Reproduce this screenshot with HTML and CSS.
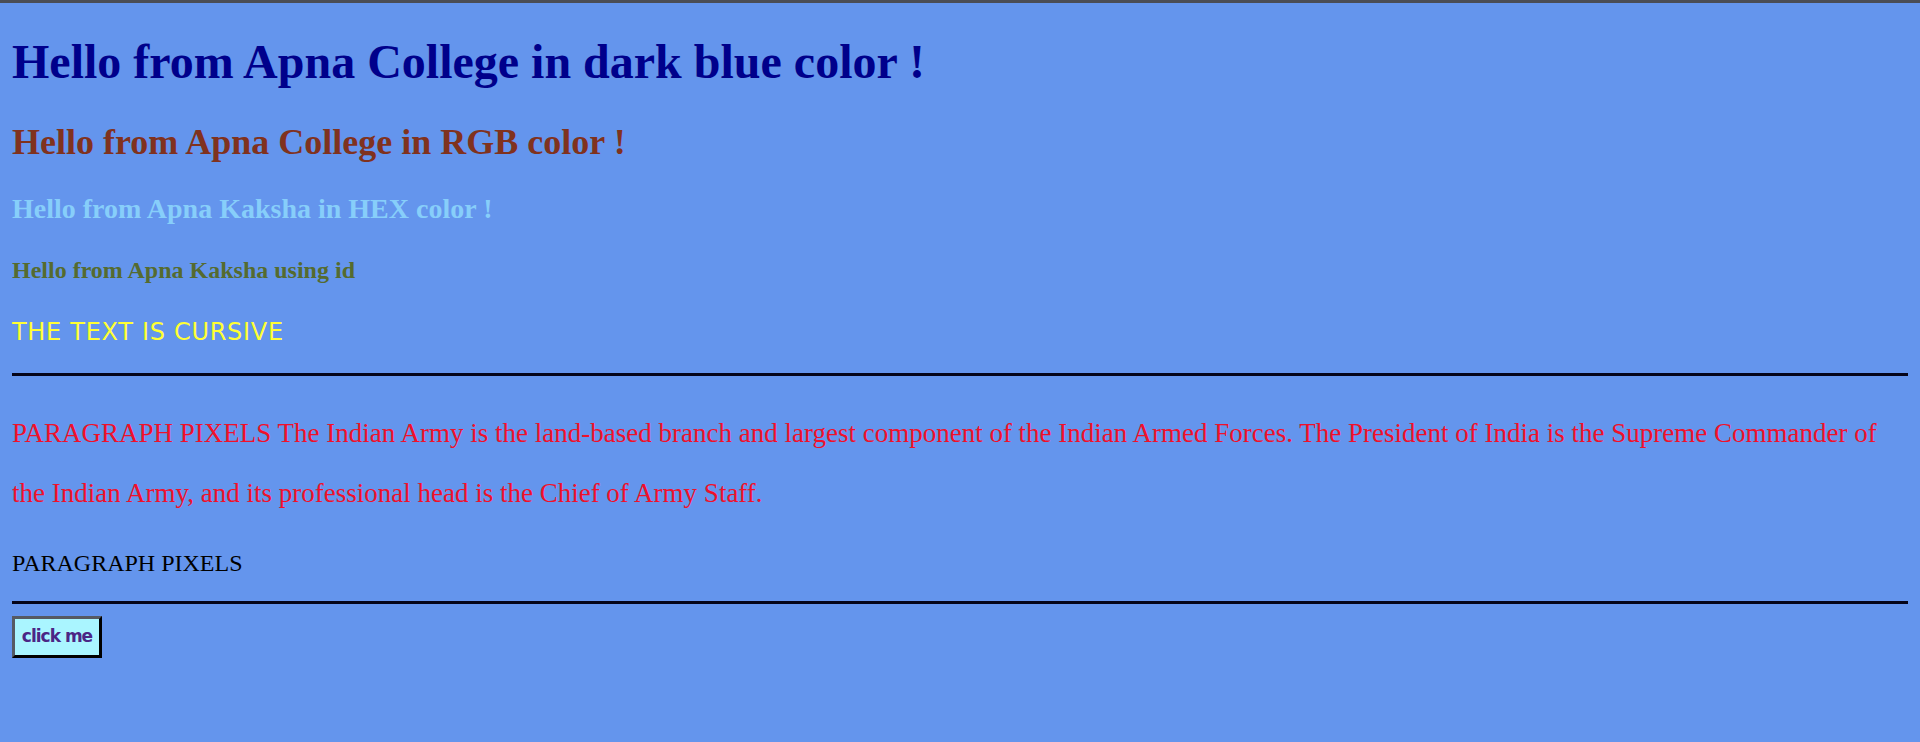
FILE: index.html
```html
<!DOCTYPE html>
<html lang="en">
<head>
<meta charset="utf-8">
<title>Colors</title>
<link rel="stylesheet" href="styles.css">
</head>
<body>
<h1 class="dark-blue">Hello from Apna College in dark blue color !</h1>
<h2 class="rgb">Hello from Apna College in RGB color !</h2>
<h3 class="hex">Hello from Apna Kaksha in HEX color !</h3>
<h4 class="by-id">Hello from Apna Kaksha using id</h4>
<p class="cursive">THE TEXT IS CURSIVE</p>
<hr class="rule">
<p class="para-red">PARAGRAPH PIXELS The Indian Army is the land-based branch and largest component of the Indian Armed Forces. The President of India is the Supreme Commander of the Indian Army, and its professional head is the Chief of Army Staff.</p>
<p class="para">PARAGRAPH PIXELS</p>
<hr class="rule rule-btn">
<button class="btn">click me</button>
</body>
</html>
```
FILE: styles.css
```css
html {
  background: #6495ed;
  border-top: 3px solid #4a4d55;
}
body {
  margin: 12px;
  font-family: "Liberation Serif", "Times New Roman", serif;
  color: #000;
}
h1, h2, h3, h4 {
  font-weight: bold;
}
.dark-blue {
  font-size: 48px;
  margin: 19px 0 32px;
  color: #00008b;
}
.rgb {
  font-size: 36px;
  margin: 29.9px 0;
  color: rgb(128, 50, 30);
}
.hex {
  font-size: 28px;
  margin: 28px 0;
  color: #87cefa;
}
.by-id {
  font-size: 24px;
  margin: 32px 0;
  color: #556b2f;
}
.cursive {
  font-family: "DejaVu Sans", sans-serif;
  font-size: 24px;
  letter-spacing: 0.7px;
  line-height: 33.5px;
  margin: 24px 0;
  color: #ffff33;
}
.rule {
  border: 0;
  height: 3px;
  background: #05051a;
  margin: 24px 0 26px;
}
.para-red {
  font-size: 27px;
  line-height: 60px;
  margin: 27px 0;
  color: #f0102a;
}
.para {
  font-size: 24px;
  margin: 27px 0 24px;
  color: #000;
}
.rule-btn {
  margin: 24px 0 12px;
}
.btn {
  display: inline-flex;
  align-items: center;
  justify-content: center;
  box-sizing: border-box;
  width: 90px;
  height: 42px;
  padding: 0 0 2px;
  background: #aaf5ff;
  color: #4b2585;
  font-family: "DejaVu Sans", sans-serif;
  font-weight: bold;
  font-size: 17px;
  letter-spacing: -1px;
  border-style: solid;
  border-width: 3px;
  border-color: #565a63 #000 #000 #565a63;
}
```
